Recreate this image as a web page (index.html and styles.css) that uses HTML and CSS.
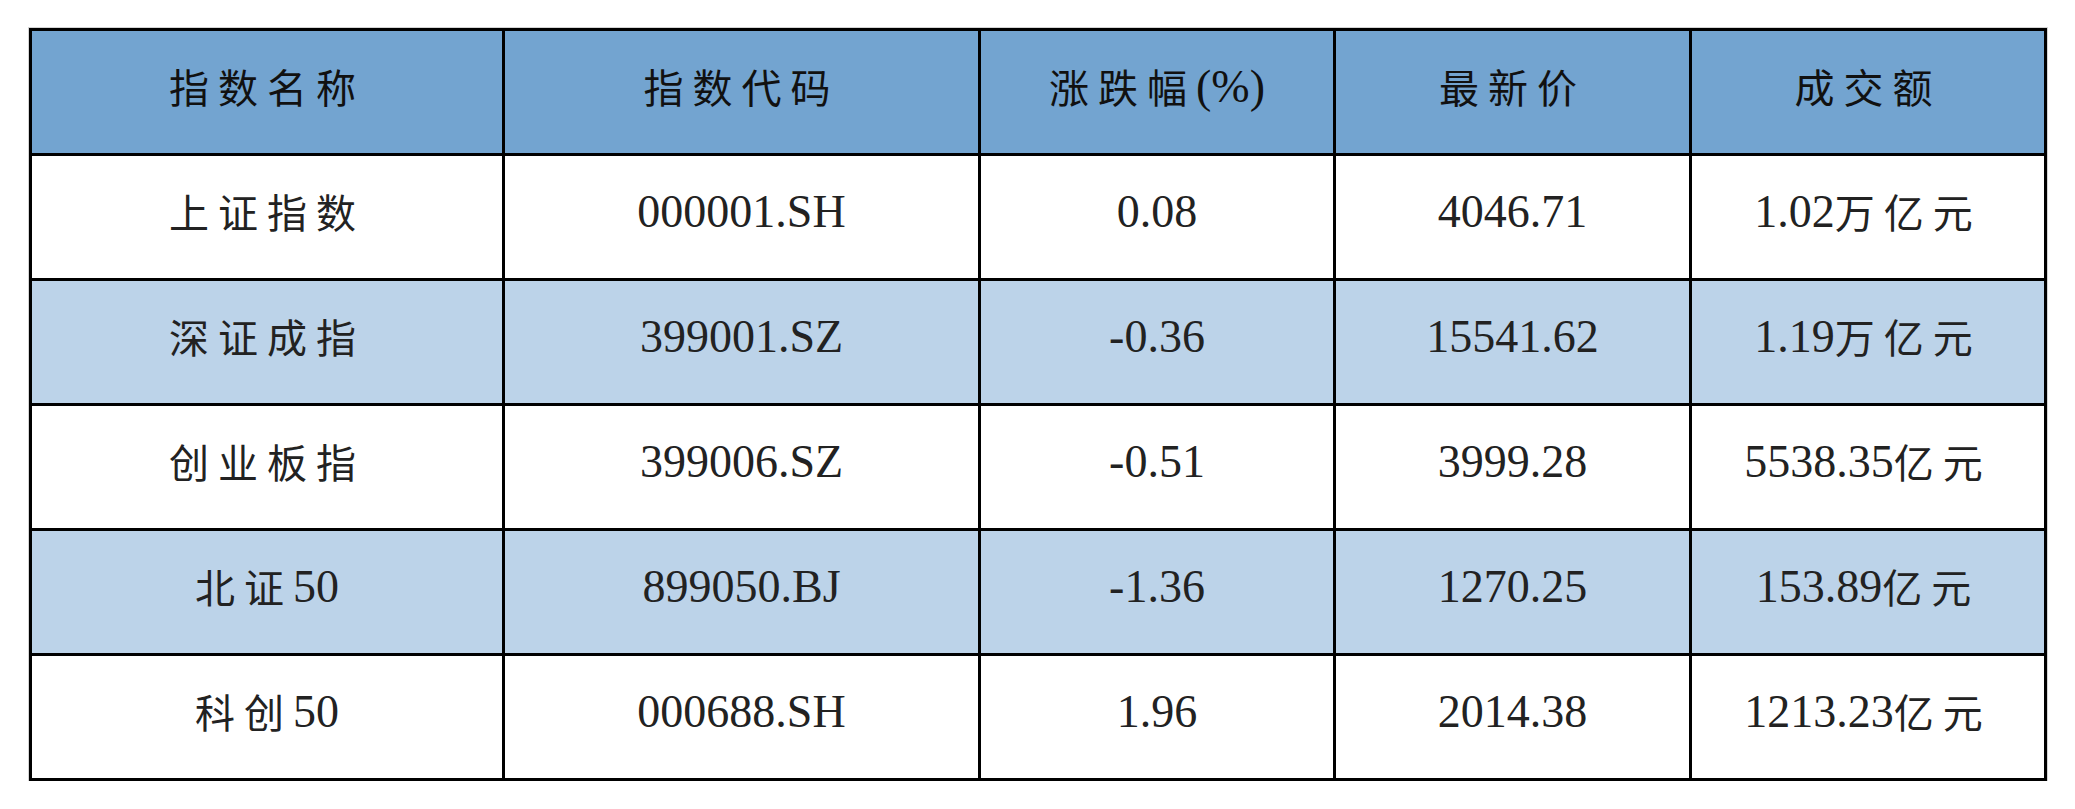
FILE: index.html
```html
<!DOCTYPE html>
<html lang="zh-CN">
<head>
<meta charset="utf-8">
<title>指数行情</title>
<link rel="stylesheet" href="styles.css">
</head>
<body>
<div class="page">
  <div class="table">
    <div class="cell head"><span class="cjk">指数名称</span></div>
    <div class="cell head"><span class="cjk">指数代码</span></div>
    <div class="cell head"><span class="cjk">涨跌幅</span>(%)</div>
    <div class="cell head"><span class="cjk">最新价</span></div>
    <div class="cell head"><span class="cjk">成交额</span></div>

    <div class="cell"><span class="cjk">上证指数</span></div>
    <div class="cell">000001.SH</div>
    <div class="cell">0.08</div>
    <div class="cell">4046.71</div>
    <div class="cell">1.02<span class="cjk">万亿元</span></div>

    <div class="cell alt"><span class="cjk">深证成指</span></div>
    <div class="cell alt">399001.SZ</div>
    <div class="cell alt">-0.36</div>
    <div class="cell alt">15541.62</div>
    <div class="cell alt">1.19<span class="cjk">万亿元</span></div>

    <div class="cell"><span class="cjk">创业板指</span></div>
    <div class="cell">399006.SZ</div>
    <div class="cell">-0.51</div>
    <div class="cell">3999.28</div>
    <div class="cell">5538.35<span class="cjk">亿元</span></div>

    <div class="cell alt"><span class="cjk">北证</span>50</div>
    <div class="cell alt">899050.BJ</div>
    <div class="cell alt">-1.36</div>
    <div class="cell alt">1270.25</div>
    <div class="cell alt">153.89<span class="cjk">亿元</span></div>

    <div class="cell"><span class="cjk">科创</span>50</div>
    <div class="cell">000688.SH</div>
    <div class="cell">1.96</div>
    <div class="cell">2014.38</div>
    <div class="cell">1213.23<span class="cjk">亿元</span></div>
  </div>
</div>
</body>
</html>
```

FILE: styles.css
```css
html, body {
  margin: 0;
  padding: 0;
  background: #ffffff;
}

.page {
  padding: 28px 0 0 29px;
}

.table {
  display: grid;
  grid-template-columns: 470px 473px 352px 353px 352px;
  grid-auto-rows: 122px;
  gap: 3px;
  padding: 3px;
  width: max-content;
  background: #000000;
  box-shadow: 0 0 0 1px #d4d4d4;
}

.cell {
  display: flex;
  align-items: center;
  justify-content: center;
  padding-bottom: 12px;
  box-sizing: border-box;
  background: #ffffff;
  color: #222222;
  font-family: "Liberation Serif", "Noto Sans CJK SC", serif;
  font-size: 46px;
  white-space: nowrap;
}

.head {
  background: #73a4d0;
  color: #111111;
}

.alt {
  background: #bcd3e9;
}

.cjk {
  font-family: "Noto Sans CJK SC", sans-serif;
  font-size: 40px;
  letter-spacing: 9px;
}
```
